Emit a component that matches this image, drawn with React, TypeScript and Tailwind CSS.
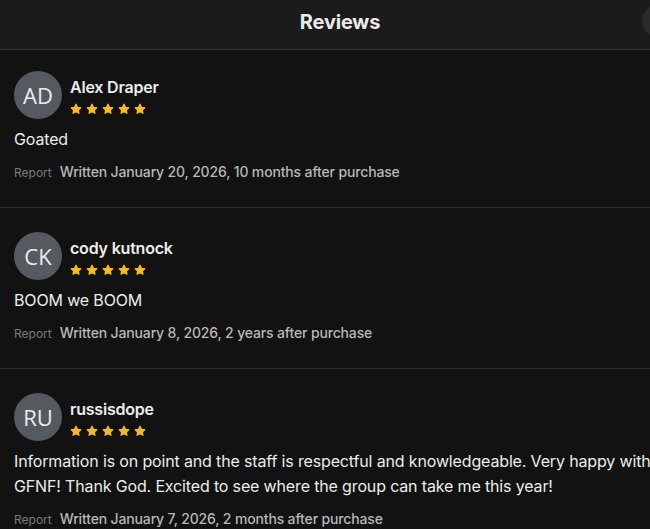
import React from "react"

const reviews = [
  {
    id: "1",
    initials: "AD",
    name: "Alex Draper",
    text: "Goated",
    written: "Written January 20, 2026, 10 months after purchase",
  },
  {
    id: "2",
    initials: "CK",
    name: "cody kutnock",
    text: "BOOM we BOOM",
    written: "Written January 8, 2026, 2 years after purchase",
  },
  {
    id: "3",
    initials: "RU",
    name: "russisdope",
    text: "Information is on point and the staff is respectful and knowledgeable. Very happy with GFNF! Thank God. Excited to see where the group can take me this year!",
    written: "Written January 7, 2026, 2 months after purchase",
  },
]

const Star = () => (
  <svg width="12" height="12" viewBox="0 0 24 24" className="text-[#f7b928]">
    <path
      d="M12 2.5l2.9 6.1 6.6.8-4.9 4.6 1.3 6.6L12 17.3l-5.9 3.3 1.3-6.6-4.9-4.6 6.6-.8z"
      fill="currentColor"
      stroke="currentColor"
      strokeWidth="2.5"
      strokeLinejoin="round"
    />
  </svg>
)

const ReviewCard: React.FC<{ review: (typeof reviews)[number]; first?: boolean }> = ({ review, first }) => (
  <div className={first ? "border-b border-[#2c2c2c] px-[14px] pt-[21px] pb-[25px]" : "border-b border-[#2c2c2c] px-[14px] pt-6 pb-[25px]"}>
    <div className="flex gap-2">
      <div className="flex h-12 w-12 shrink-0 items-center justify-center rounded-full bg-[#555a61] text-[22px] text-[#ececec] font-['Open_Sans',sans-serif]">
        {review.initials}
      </div>
      <div className="flex flex-col pt-[4px]">
        <span className="text-[16px] leading-6 font-semibold tracking-[-0.2px] text-[#ededed]">{review.name}</span>
        <div className="mt-[4px] flex gap-[4px]">
          <Star />
          <Star />
          <Star />
          <Star />
          <Star />
        </div>
      </div>
    </div>
    <p className="mt-2 text-[16px] leading-[25px] tracking-[-0.15px] text-[#ececec]">{review.text}</p>
    <div className="mt-[9px] flex items-baseline gap-2">
      <span className="text-[12px] text-[#7a7a7a]">Report</span>
      <span className="text-[14px] font-medium tracking-[-0.15px] text-[#b8b8b8]">{review.written}</span>
    </div>
  </div>
)

export default function App() {
  return (
    <div className="h-[529px] w-full overflow-hidden bg-[#121212] font-['Inter',sans-serif]">
      <div className="w-[680px]">
        <div className="relative flex h-[50px] items-center justify-center border-b border-[#333333] bg-[#1b1b1b] pb-[6px]">
          <h1 className="text-[20px] font-bold tracking-[-0.2px] text-[#ebebeb]">Reviews</h1>
          <button className="absolute left-[642px] top-[5px] h-8 w-8 rounded-full bg-[#2a2a2a]" />
        </div>
        {reviews.map((r, i) => (
          <ReviewCard key={r.id} review={r} first={i === 0} />
        ))}
      </div>
    </div>
  )
}
